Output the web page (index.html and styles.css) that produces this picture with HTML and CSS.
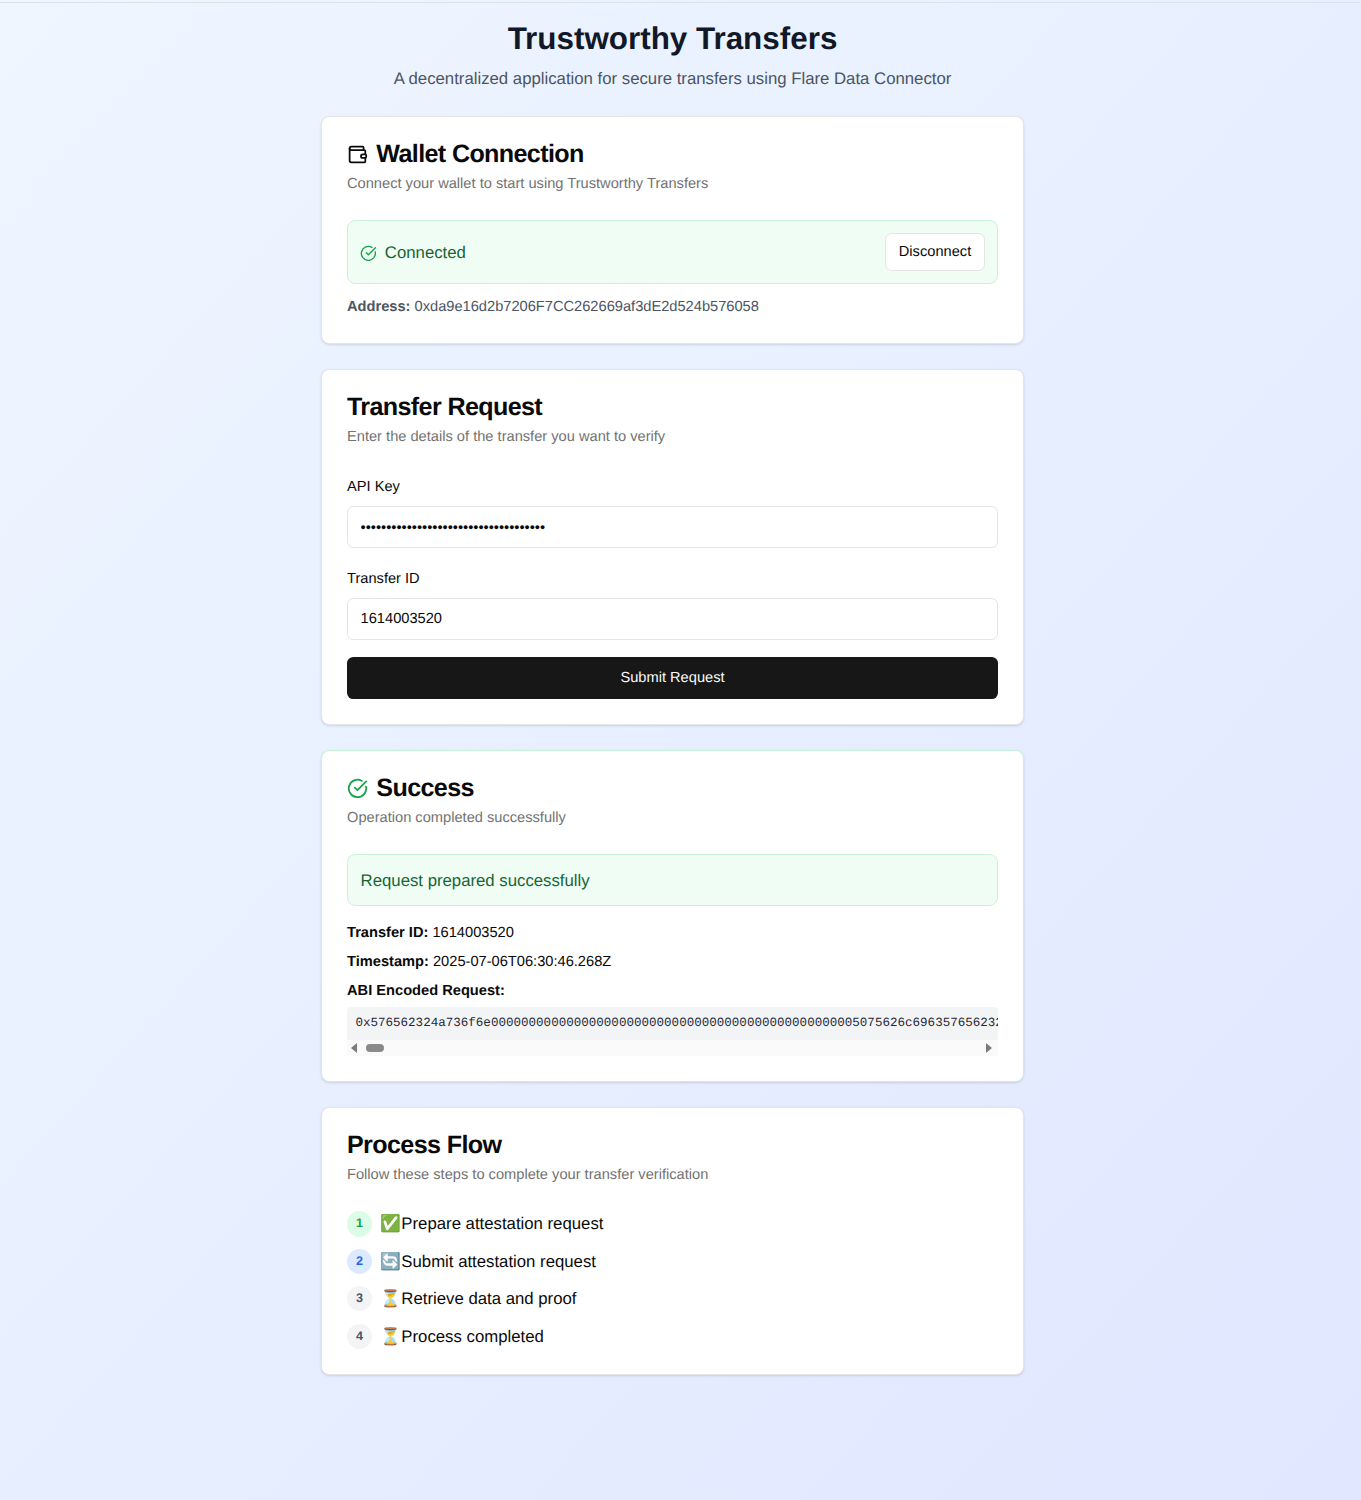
FILE: index.html
```html
<!DOCTYPE html>
<html lang="en">
<head>
    <meta charset="UTF-8">
    <meta name="viewport" content="width=device-width, initial-scale=1.0">
    <title>Trustworthy Transfers</title>
    <link rel="stylesheet" href="styles.css">
</head>
<body>
<div class="page">
    <header class="header">
        <h1>Trustworthy Transfers</h1>
        <p>A decentralized application for secure transfers using Flare Data Connector</p>
    </header>

    <section class="card">
        <div class="card-head">
            <h2 class="card-title">
                <svg class="title-icon" viewBox="0 0 24 24" fill="none" stroke="currentColor" stroke-width="2" stroke-linecap="round" stroke-linejoin="round">
                    <path d="M19 7V4a1 1 0 0 0-1-1H5a2 2 0 0 0 0 4h15a1 1 0 0 1 1 1v4h-3a2 2 0 0 0 0 4h3a1 1 0 0 0 1-1v-2a1 1 0 0 0-1-1"/>
                    <path d="M3 5v14a2 2 0 0 0 2 2h15a1 1 0 0 0 1-1v-4"/>
                </svg>
                Wallet Connection
            </h2>
            <p class="card-desc">Connect your wallet to start using Trustworthy Transfers</p>
        </div>
        <div class="notice notice-connected">
            <span class="status">
                <svg class="status-icon" viewBox="0 0 24 24" fill="none" stroke="currentColor" stroke-width="2" stroke-linecap="round" stroke-linejoin="round">
                    <path d="M21.801 10A10 10 0 1 1 17 3.335"/>
                    <path d="m9 11 3 3L22 4"/>
                </svg>
                Connected
            </span>
            <button class="btn-outline">Disconnect</button>
        </div>
        <p class="address"><strong>Address:</strong> 0xda9e16d2b7206F7CC262669af3dE2d524b576058</p>
    </section>

    <section class="card">
        <div class="card-head">
            <h2 class="card-title">Transfer Request</h2>
            <p class="card-desc">Enter the details of the transfer you want to verify</p>
        </div>
        <form class="form">
            <div class="field">
                <label for="api-key">API Key</label>
                <input id="api-key" type="password" value="••••••••••••••••••••••••••••••••••••">
            </div>
            <div class="field">
                <label for="transfer-id">Transfer ID</label>
                <input id="transfer-id" type="text" value="1614003520">
            </div>
            <button class="btn-submit" type="button">Submit Request</button>
        </form>
    </section>

    <section class="card card-success">
        <div class="card-head">
            <h2 class="card-title">
                <svg class="title-icon icon-green" viewBox="0 0 24 24" fill="none" stroke="currentColor" stroke-width="2" stroke-linecap="round" stroke-linejoin="round">
                    <path d="M21.801 10A10 10 0 1 1 17 3.335"/>
                    <path d="m9 11 3 3L22 4"/>
                </svg>
                Success
            </h2>
            <p class="card-desc">Operation completed successfully</p>
        </div>
        <div class="notice notice-success">Request prepared successfully</div>
        <p class="result"><strong>Transfer ID:</strong> 1614003520</p>
        <p class="result"><strong>Timestamp:</strong> 2025-07-06T06:30:46.268Z</p>
        <p class="result result-label"><strong>ABI Encoded Request:</strong></p>
        <div class="code-box">
            <pre class="code">0x576562324a736f6e0000000000000000000000000000000000000000000000005075626c696357656232</pre>
            <div class="scrollbar">
                <span class="arrow arrow-left"></span>
                <span class="thumb"></span>
                <span class="arrow arrow-right"></span>
            </div>
        </div>
    </section>

    <section class="card">
        <div class="card-head">
            <h2 class="card-title">Process Flow</h2>
            <p class="card-desc">Follow these steps to complete your transfer verification</p>
        </div>
        <ol class="steps">
            <li class="step"><span class="badge badge-done">1</span><span>✅Prepare attestation request</span></li>
            <li class="step"><span class="badge badge-active">2</span><span>🔄Submit attestation request</span></li>
            <li class="step"><span class="badge">3</span><span>⏳Retrieve data and proof</span></li>
            <li class="step"><span class="badge">4</span><span>⏳Process completed</span></li>
        </ol>
    </section>
</div>
</body>
</html>
```

FILE: styles.css
```css
* {
    box-sizing: border-box;
}

html {
    font-size: 16.75px;
    height: 1500px;
}

body {
    margin: 0;
    height: 1500px;
    overflow: hidden;
    font-family: "Liberation Sans", Arial, sans-serif;
    text-rendering: geometricPrecision;
    color: #0a0a0a;
    background: linear-gradient(to bottom right, #eff6ff, #e0e7ff);
    border-top: 1px solid transparent;
}

/* the content column sits left of centre, the original had a scrollbar gutter */
.page {
    width: 703px;
    margin-left: 321px;
}

.header {
    text-align: center;
    padding-top: 19px;
    margin-bottom: 25px;
}

.header::before {
    content: "";
    position: absolute;
    top: 2px;
    left: 0;
    right: 0;
    height: 1px;
    background: #dbe2e8;
}

.header h1 {
    margin: 0;
    font-size: 1.875rem;
    line-height: 2.25rem;
    font-weight: 700;
    color: #111827;
}

.header p {
    margin: 0.5rem 0 0;
    font-size: 1rem;
    line-height: 1.5rem;
    color: #4b5563;
}

.card {
    background: #fff;
    border: 1px solid #e5e5e5;
    border-radius: 0.5rem;
    box-shadow: 0 1px 3px rgba(0, 0, 0, 0.1), 0 1px 2px -1px rgba(0, 0, 0, 0.1);
    padding: 25.1px 25px 25px;
    margin-bottom: 1.5rem;
}

.card-success {
    border-color: #c8f2d8;
}

.card-head {
    margin-bottom: 24.6px;
}

.card-success .card-head {
    margin-bottom: 25.6px;
}

.card-title {
    display: flex;
    align-items: center;
    gap: 0.5rem;
    margin: 0;
    font-size: 1.5rem;
    line-height: 1;
    font-weight: 600;
    letter-spacing: -0.025em;
}

.title-icon {
    width: 1.25rem;
    height: 1.25rem;
    flex-shrink: 0;
}

.icon-green {
    color: #16a34a;
}

.card-desc {
    margin: 6.8px 0 0;
    font-size: 0.875rem;
    line-height: 1.25rem;
    color: #737373;
}

.notice {
    border-radius: 0.5rem;
    padding: 12.3px 12px 12.3px 12.6px;
    font-size: 1rem;
    color: #166534;
    background: #f0fdf4;
    border: 1px solid #c8f2d8;
}

.notice-connected {
    display: flex;
    align-items: center;
    justify-content: space-between;
}

.notice-success {
    line-height: 1.5rem;
    margin-bottom: 1rem;
}

.status {
    display: flex;
    align-items: center;
    gap: 8px;
    padding-top: 2px;
}

.status-icon {
    width: 1rem;
    height: 1rem;
    margin-left: -0.5px;
    color: #16a34a;
}

.btn-outline {
    height: 2.25rem;
    width: 100px;
    padding: 0;
    background: #fff;
    border: 1px solid #e5e5e5;
    border-radius: 0.375rem;
    font: 0.875rem "Liberation Sans", Arial, sans-serif;
    text-rendering: geometricPrecision;
    color: #0a0a0a;
}

.address {
    margin: 0.75rem 0 0;
    font-size: 0.875rem;
    line-height: 1.25rem;
    color: #4b5563;
}

.form {
    display: flex;
    flex-direction: column;
    padding-top: 4.5px;
}

.field {
    margin-bottom: 1rem;
}

.field + .field {
    margin-top: 4px;
}

.field label {
    display: block;
    font-size: 0.875rem;
    line-height: 1.25rem;
    margin-bottom: 8.5px;
}

.field input {
    display: block;
    width: 100%;
    height: 2.5rem;
    padding: 0 0.75rem;
    border: 1px solid #e5e5e5;
    border-radius: 0.375rem;
    font: 0.875rem "Liberation Sans", Arial, sans-serif;
    text-rendering: geometricPrecision;
    color: #0a0a0a;
    background: #fff;
}

.field input[type="password"] {
    padding-top: 1px;
}

.btn-submit {
    height: 2.5rem;
    border: none;
    border-radius: 0.375rem;
    background: #171717;
    color: #fafafa;
    font: 0.875rem "Liberation Sans", Arial, sans-serif;
    text-rendering: geometricPrecision;
}

.result {
    margin: 0 0 0.5rem;
    font-size: 0.875rem;
    line-height: 1.25rem;
}

.result-label {
    margin-bottom: 4.4px;
}

.code {
    margin: 0;
    height: 33px;
    overflow: hidden;
    padding: 0.5rem;
    background: #f3f4f6;
    border-radius: 0.25rem 0.25rem 0 0;
    font-family: "Liberation Mono", "Courier New", monospace;
    font-size: 0.75rem;
    line-height: 1rem;
    color: #1f2937;
}

.scrollbar {
    display: flex;
    align-items: center;
    justify-content: space-between;
    height: 16px;
    background: #fafafa;
    padding: 0 6px 0 4px;
}

.arrow {
    width: 0;
    height: 0;
    border-top: 5px solid transparent;
    border-bottom: 5px solid transparent;
}

.arrow-left {
    border-right: 6px solid #7c7c7c;
}

.arrow-right {
    border-left: 6px solid #7c7c7c;
}

.thumb {
    width: 18px;
    height: 8px;
    border-radius: 4px;
    background: #8a8a8a;
    margin-left: 9px;
    margin-right: auto;
}

.steps {
    list-style: none;
    margin: 0;
    padding: 1px 0 0;
    display: flex;
    flex-direction: column;
    gap: 12.3px;
}

.step {
    display: flex;
    align-items: center;
    gap: 0.5rem;
    font-size: 1rem;
    line-height: 1.5rem;
}

.badge {
    width: 1.5rem;
    height: 1.5rem;
    border-radius: 50%;
    display: flex;
    align-items: center;
    justify-content: center;
    font-size: 0.75rem;
    font-weight: 700;
    color: #4b5563;
    background: #f3f4f6;
}

.badge-done {
    background: #dcfce7;
    color: #16a34a;
}

.badge-active {
    background: #dbeafe;
    color: #2563eb;
}
```
